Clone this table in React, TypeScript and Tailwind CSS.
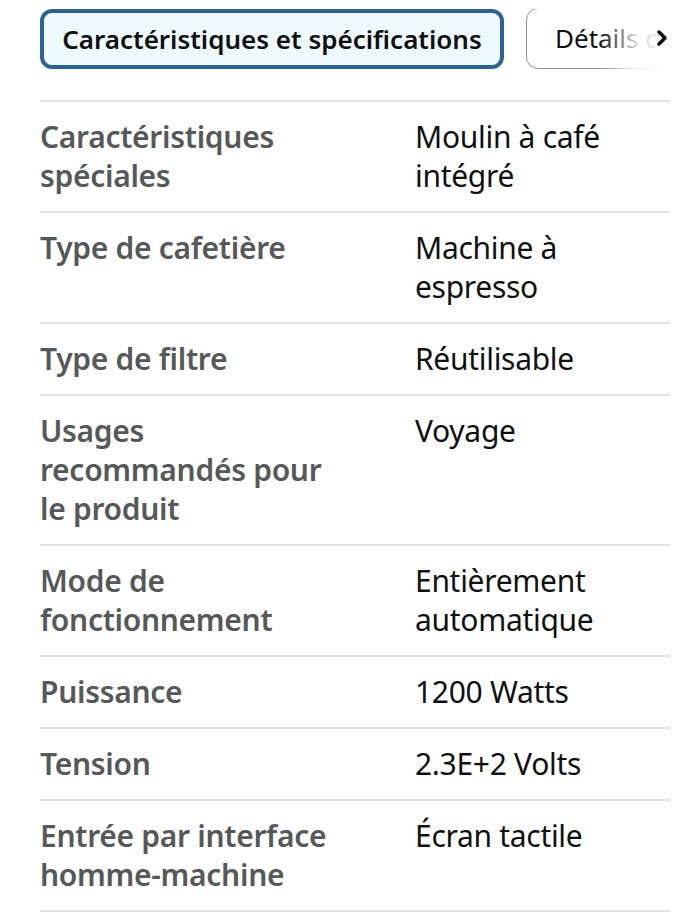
import { ChevronRight } from "lucide-react";

const specs = [
  { label: "Caractéristiques spéciales", value: "Moulin à café intégré" },
  { label: "Type de cafetière", value: "Machine à espresso" },
  { label: "Type de filtre", value: "Réutilisable" },
  { label: "Usages recommandés pour le produit", value: "Voyage" },
  { label: "Mode de fonctionnement", value: "Entièrement automatique" },
  { label: "Puissance", value: "1200 Watts" },
  { label: "Tension", value: "2.3E+2 Volts" },
  { label: "Entrée par interface homme-machine", value: "Écran tactile" },
];

export default function App() {
  return (
    <div className="min-h-screen bg-white font-['Noto_Sans',sans-serif] px-10 pt-[9px]">
      <div className="flex gap-[22px] overflow-hidden w-[630px]">
        <button className="shrink-0 h-[60px] w-[464px] rounded-[12px] border-4 border-[#2a6398] bg-[#eef9fd] text-[26px] font-semibold tracking-[0px] text-[#0f1111] whitespace-nowrap">
          Caractéristiques et spécifications
        </button>
        <div className="relative shrink-0 w-[144px] h-[61px] mt-[-1px]">
          <div className="h-[61px] w-[220px] rounded-[12px] border border-[#8d9090] flex items-center pl-[28px] text-[26px] text-[#0f1111] whitespace-nowrap">
            Détails du produit
          </div>
          <div className="absolute inset-y-0 right-0 w-[70px] bg-gradient-to-r from-white/0 via-white/80 to-white" />
          <ChevronRight className="absolute right-[-4px] top-[18px] w-[24px] h-[24px] text-[#0f1111]" strokeWidth={3.5} />
        </div>
      </div>

      <div className="mt-[31px] border-t-2 border-[#e3e3e3] w-[630px]">
        {specs.map((s) => (
          <div key={s.label} className="flex pt-[15px] pb-[16px] border-b-2 border-[#e3e3e3] text-[30px] leading-[39px]">
            <div className="w-[300px] shrink-0 font-semibold text-[#565959] tracking-[-0.3px]">{s.label}</div>
            <div className="ml-[75px] w-[255px] text-[#0f1111] tracking-[-0.3px]">{s.value}</div>
          </div>
        ))}
      </div>
    </div>
  );
}
